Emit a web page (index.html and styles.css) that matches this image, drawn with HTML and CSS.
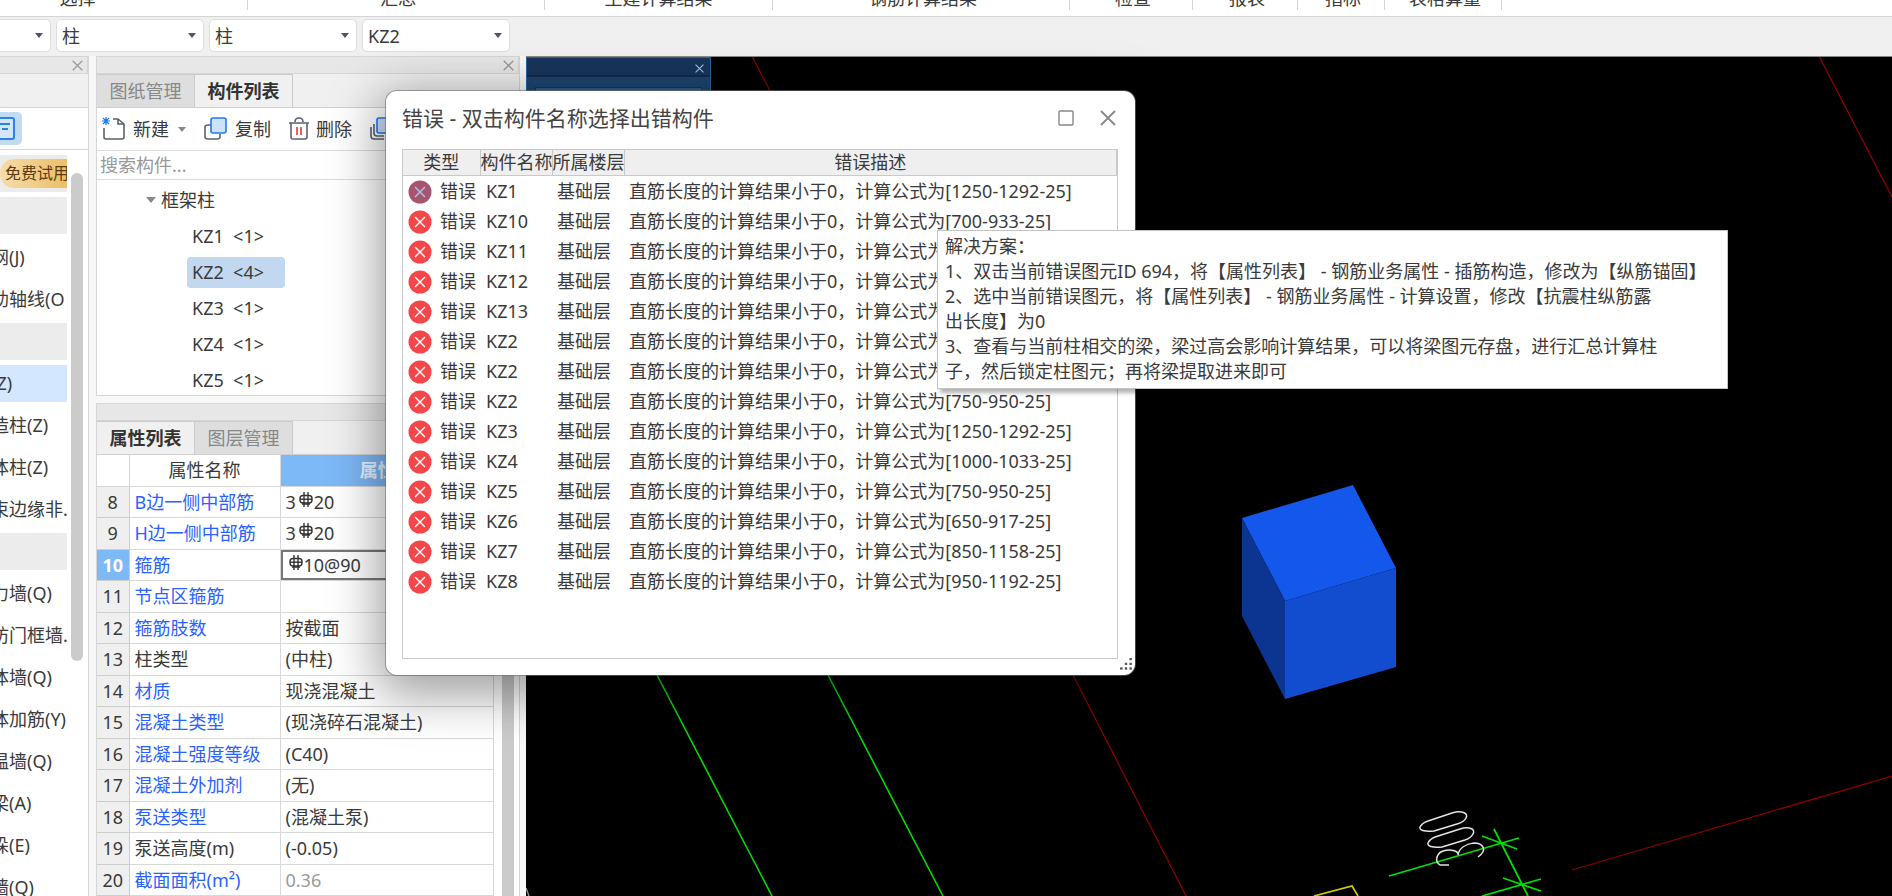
FILE: index.html
```html
<!DOCTYPE html>
<html lang="zh-CN">
<head>
<meta charset="utf-8">
<title>构件列表</title>
<link rel="stylesheet" href="styles.css">
</head>
<body>
<svg class="defs" aria-hidden="true">
  <symbol id="rebar" viewBox="0 0 14 16"><g fill="none" stroke="#333" stroke-width="1.4"><path d="M5 0V15M9 0V15M3 12H11"/><rect x="1" y="3.500" width="12" height="7.500" rx="3"/><path d="M1 7.200H13"/></g></symbol>
  <symbol id="err" viewBox="0 0 24 24"><circle cx="12" cy="12" r="11.500"/><path d="M7 7 17 17M17 7 7 17" fill="none" stroke="currentColor" stroke-width="1.400"/></symbol>
  <symbol id="cross" viewBox="0 0 16 16"><path d="M1 1 15 15M15 1 1 15" fill="none" stroke="currentColor" stroke-width="1.800"/></symbol>
</svg>

<header class="ribbon">
  <span class="group g-select">选择</span><span class="group g-sum">汇总</span><span class="group g-civil">土建计算结果</span><span class="group g-steel">钢筋计算结果</span><span class="group g-check">检查</span><span class="group g-report">报表</span><span class="group g-index">指标</span><span class="group g-table">表格算量</span>
</header>

<div class="toolbar">
  <span class="combo combo-cut"><select aria-label="楼层"><option></option></select></span>
  <span class="combo"><select aria-label="构件大类"><option>柱</option></select></span>
  <span class="combo"><select aria-label="构件类型"><option>柱</option></select></span>
  <span class="combo"><select aria-label="构件"><option>KZ2</option></select></span>
</div>

<main class="workspace">
  <aside class="modules">
    <div class="panel-head"><button class="close" aria-label="关闭"><svg><use href="#cross"/></svg></button></div>
    <div class="modules-band"></div>
    <div class="modules-tools"><button class="view-btn" aria-label="列表视图"><svg width="22" height="26" viewBox="0 0 22 26"><rect x="-6" y="2" width="20" height="21" rx="2" fill="#d3e6fb" stroke="#2a82e4" stroke-width="2"/><path d="M-2 8H10M2 13H8" stroke="#2a82e4" stroke-width="2"/></svg></button></div>
    <div class="modules-body">
      <ul class="modules-list">
        <li class="band"><span class="trial">免费试用</span></li>
        <li class="band"></li>
        <li>轴网(J)</li>
        <li>辅助轴线(O</li>
        <li class="band"></li>
        <li class="on">柱(Z)</li>
        <li>构造柱(Z)</li>
        <li>砌体柱(Z)</li>
        <li>约束边缘非.</li>
        <li class="band"></li>
        <li>剪力墙(Q)</li>
        <li>人防门框墙.</li>
        <li>砌体墙(Q)</li>
        <li>砌体加筋(Y)</li>
        <li>保温墙(Q)</li>
        <li>暗梁(A)</li>
        <li>墙垛(E)</li>
        <li>幕墙(Q)</li>
      </ul>
      <div class="modules-scroll"></div>
    </div>
  </aside>

  <div class="side">
    <section class="panel components">
      <div class="panel-head"><button class="close" aria-label="关闭"><svg><use href="#cross"/></svg></button></div>
      <div class="tabs"><button>图纸管理</button><button class="on">构件列表</button></div>
      <div class="actions">
        <button><svg width="24" height="24" viewBox="0 0 24 24" fill="none"><path d="M2 11V20Q2 22 4 22H20Q22 22 22 20V7L16 2H11M16 2V7H22" stroke="#5a6270" stroke-width="1.600"/><path d="M1 1 7 7M7 1 1 7M4 0V8M0 4H8" stroke="#1e7bf0" stroke-width="1.200"/></svg>新建<i class="caret"></i></button>
        <button><svg width="24" height="24" viewBox="0 0 24 24" fill="none"><path d="M7 8H4Q1 8 1 10V20Q1 22 4 22H13Q16 22 16 20V17" stroke="#5a6270" stroke-width="1.600"/><rect x="7" y="1" width="15" height="15" rx="2" fill="#cfe2fb" stroke="#1e7bf0" stroke-width="1.600"/></svg>复制</button>
        <button><svg width="20" height="24" viewBox="0 0 20 24" fill="none"><path d="M0 6H20M6 5Q6 1 10 1T14 5M2 6V20Q2 22 4 22H16Q18 22 18 20V6" stroke="#5a6270" stroke-width="1.600"/><path d="M8 10V18M12 10V18" stroke="#e23b3b" stroke-width="1.600"/></svg>删除</button>
        <button aria-label="层间复制"><svg width="24" height="24" viewBox="0 0 24 24" fill="none"><path d="M1 10V19Q1 22 4 22H14M4 7V16Q4 19 7 19H14" stroke="#5a6270" stroke-width="1.600"/><rect x="7" y="1" width="15" height="15" rx="2" fill="#cfe2fb" stroke="#1e7bf0" stroke-width="1.600"/></svg></button>
      </div>
      <input class="search" type="text" aria-label="搜索构件" placeholder="搜索构件...">
      <ul class="tree">
        <li class="root"><i class="caret"></i>框架柱</li>
        <li><span>KZ1  &lt;1&gt;</span></li>
        <li><span class="on">KZ2  &lt;4&gt;</span></li>
        <li><span>KZ3  &lt;1&gt;</span></li>
        <li><span>KZ4  &lt;1&gt;</span></li>
        <li><span>KZ5  &lt;1&gt;</span></li>
      </ul>
    </section>

    <section class="panel props">
      <div class="panel-head"></div>
      <div class="tabs"><button class="on">属性列表</button><button>图层管理</button></div>
      <div class="props-body">
        <table class="props-table">
          <colgroup><col class="c-num"><col class="c-name"><col></colgroup>
          <thead><tr><th></th><th>属性名称</th><th class="blue">属性值</th></tr></thead>
          <tbody>
            <tr><th>8</th><td class="link">B边一侧中部筋</td><td>3<svg class="rb"><use href="#rebar"/></svg>20</td></tr>
            <tr><th>9</th><td class="link">H边一侧中部筋</td><td>3<svg class="rb"><use href="#rebar"/></svg>20</td></tr>
            <tr><th class="cur">10</th><td class="link">箍筋</td><td class="edit"><svg class="rb"><use href="#rebar"/></svg>10@90</td></tr>
            <tr><th>11</th><td class="link">节点区箍筋</td><td></td></tr>
            <tr><th>12</th><td class="link">箍筋肢数</td><td>按截面</td></tr>
            <tr><th>13</th><td>柱类型</td><td>(中柱)</td></tr>
            <tr><th>14</th><td class="link">材质</td><td>现浇混凝土</td></tr>
            <tr><th>15</th><td class="link">混凝土类型</td><td>(现浇碎石混凝土)</td></tr>
            <tr><th>16</th><td class="link">混凝土强度等级</td><td>(C40)</td></tr>
            <tr><th>17</th><td class="link">混凝土外加剂</td><td>(无)</td></tr>
            <tr><th>18</th><td class="link">泵送类型</td><td>(混凝土泵)</td></tr>
            <tr><th>19</th><td>泵送高度(m)</td><td>(-0.05)</td></tr>
            <tr><th>20</th><td class="link">截面面积(m²)</td><td class="dim">0.36</td></tr>
          </tbody>
        </table>
        <div class="props-scroll"></div>
      </div>
    </section>
  </div>

  <section class="view">
    <svg class="scene" aria-label="三维视图">
      <g transform="translate(-526 -57)" fill="none" stroke-width="1.300">
        <g stroke="#8a0000"><path d="M752 56 770 91M1819 56 1892 197M1073 675 1186 896M1572 870 1892 776"/></g>
        <g stroke="#00dc00" stroke-width="1.600"><path d="M657 675 772 896M828 675 943 896"/></g>
        <g stroke="#00e000" stroke-width="1.800"><path d="M1389 876 1519 838M1494 829 1528 896M1482 836 1517 849M1503 878 1541 891M1482 896 1541 879"/></g>
        <path d="M1314 896 1352 886 1358 896" stroke="#d8d000" stroke-width="1.600"/>
        <path d="M526 888 529 896" stroke="#999"/>
        <g stroke="#e4e4e4" stroke-width="1.500"><path d="M1428 821 1452 813C1461 810 1469 813 1466 818Q1464 822 1457 824L1434 831C1424 832 1419 830 1420 827Q1422 823 1428 821ZM1435 837 1460 829C1469 826 1476 829 1473 834Q1471 838 1465 840L1442 847C1432 848 1427 846 1428 843Q1430 839 1435 837Z"/><path d="M1449 865H1440C1434 861 1437 853 1443 851 1452 848 1459 852 1458 855 1459 848 1466 844 1474 843 1483 843 1488 850 1478 857"/></g>
        <g stroke="none"><path d="M1242 518 1353 485 1396 568 1285 601Z" fill="#1457eb"/><path d="M1242 518 1285 601V699L1242 616Z" fill="#0c3491"/><path d="M1285 601 1396 568V667L1285 699Z" fill="#124dd0"/></g>
      </g>
    </svg>
    <div class="float"><div class="float-head"><button class="close" aria-label="关闭"><svg><use href="#cross"/></svg></button></div><div class="float-body"></div></div>
  </section>
</main>

<div class="dialog" role="dialog" aria-labelledby="dlg-title">
  <div class="dialog-head">
    <h1 id="dlg-title">错误 - 双击构件名称选择出错构件</h1>
    <button aria-label="最大化"><svg width="16" height="16" viewBox="0 0 16 16"><rect x="1" y="1" width="14" height="14" rx="1" fill="none" stroke="#888" stroke-width="1.400"/></svg></button>
    <button aria-label="关闭"><svg width="16" height="16"><use href="#cross"/></svg></button>
  </div>
  <div class="dialog-body">
    <table class="errors">
      <colgroup><col class="e-type"><col class="e-name"><col class="e-floor"><col></colgroup>
      <thead><tr><th>类型</th><th>构件名称</th><th>所属楼层</th><th>错误描述</th></tr></thead>
      <tbody>
        <tr class="sel"><td><svg class="err"><use href="#err"/></svg>错误</td><td>KZ1</td><td>基础层</td><td>直筋长度的计算结果小于0，计算公式为[1250-1292-25]</td></tr>
        <tr><td><svg class="err"><use href="#err"/></svg>错误</td><td>KZ10</td><td>基础层</td><td>直筋长度的计算结果小于0，计算公式为[700-933-25]</td></tr>
        <tr><td><svg class="err"><use href="#err"/></svg>错误</td><td>KZ11</td><td>基础层</td><td>直筋长度的计算结果小于0，计算公式为</td></tr>
        <tr><td><svg class="err"><use href="#err"/></svg>错误</td><td>KZ12</td><td>基础层</td><td>直筋长度的计算结果小于0，计算公式为</td></tr>
        <tr><td><svg class="err"><use href="#err"/></svg>错误</td><td>KZ13</td><td>基础层</td><td>直筋长度的计算结果小于0，计算公式为</td></tr>
        <tr><td><svg class="err"><use href="#err"/></svg>错误</td><td>KZ2</td><td>基础层</td><td>直筋长度的计算结果小于0，计算公式为</td></tr>
        <tr><td><svg class="err"><use href="#err"/></svg>错误</td><td>KZ2</td><td>基础层</td><td>直筋长度的计算结果小于0，计算公式为</td></tr>
        <tr><td><svg class="err"><use href="#err"/></svg>错误</td><td>KZ2</td><td>基础层</td><td>直筋长度的计算结果小于0，计算公式为[750-950-25]</td></tr>
        <tr><td><svg class="err"><use href="#err"/></svg>错误</td><td>KZ3</td><td>基础层</td><td>直筋长度的计算结果小于0，计算公式为[1250-1292-25]</td></tr>
        <tr><td><svg class="err"><use href="#err"/></svg>错误</td><td>KZ4</td><td>基础层</td><td>直筋长度的计算结果小于0，计算公式为[1000-1033-25]</td></tr>
        <tr><td><svg class="err"><use href="#err"/></svg>错误</td><td>KZ5</td><td>基础层</td><td>直筋长度的计算结果小于0，计算公式为[750-950-25]</td></tr>
        <tr><td><svg class="err"><use href="#err"/></svg>错误</td><td>KZ6</td><td>基础层</td><td>直筋长度的计算结果小于0，计算公式为[650-917-25]</td></tr>
        <tr><td><svg class="err"><use href="#err"/></svg>错误</td><td>KZ7</td><td>基础层</td><td>直筋长度的计算结果小于0，计算公式为[850-1158-25]</td></tr>
        <tr><td><svg class="err"><use href="#err"/></svg>错误</td><td>KZ8</td><td>基础层</td><td>直筋长度的计算结果小于0，计算公式为[950-1192-25]</td></tr>
      </tbody>
    </table>
  </div>
  <svg class="grip" viewBox="0 0 12 12" fill="#555"><path d="M9 0h2v2H9zM9 4h2v2H9zM5 4h2v2H5zM9 8h2v2H9zM5 8h2v2H5zM1 8h2v2H1z"/></svg>
</div>

<div class="tip" role="tooltip">解决方案：<br>1、双击当前错误图元ID 694，将【属性列表】 - 钢筋业务属性 - 插筋构造，修改为【纵筋锚固】<br>2、选中当前错误图元，将【属性列表】 - 钢筋业务属性 - 计算设置，修改【抗震柱纵筋露<br>出长度】为0<br>3、查看与当前柱相交的梁，梁过高会影响计算结果，可以将梁图元存盘，进行汇总计算柱<br>子，然后锁定柱图元；再将梁提取进来即可</div>
</body>
</html>
```
FILE: styles.css
```css
* { box-sizing: border-box; }
body {
  margin: 0;
  height: 100vh;
  overflow: hidden;
  display: flex;
  flex-direction: column;
  background: #f8f8f8;
  color: #3a3a3a;
  font: 18px/24px "Noto Sans", "Noto Sans CJK SC", sans-serif;
  position: relative;
}
button, select, input { font: inherit; color: inherit; margin: 0; }
button { border: 0; background: none; padding: 0; }
ul { list-style: none; margin: 0; padding: 0; }
svg { display: block; }
.defs { position: absolute; width: 0; height: 0; }

.ribbon { flex: none; height: 17px; display: flex; background: #fff; border-bottom: 1px solid #d4d4d4; overflow: hidden; }
.group { height: 10px; border-right: 1px solid #d4d4d4; display: flex; justify-content: center; align-items: flex-end; white-space: nowrap; }
.g-select { width: 248px; padding-right: 92px; }
.g-sum { width: 297px; padding-left: 4px; }
.g-civil { width: 228px; }
.g-steel { width: 297px; padding-left: 4px; }
.g-check { width: 123px; padding-left: 4px; }
.g-report { width: 105px; padding-left: 4px; }
.g-index { width: 87px; padding-left: 4px; }
.g-table { width: 117px; padding-left: 4px; }

.toolbar { flex: none; height: 39px; display: flex; gap: 5px; padding: 2px 0 4px; background: #f0f0f0; }
.combo { width: 148px; position: relative; }
.combo-cut { margin-left: -97px; }
.combo select { width: 100%; height: 33px; appearance: none; border: 1px solid #dedede; border-radius: 5px; background: #fff; padding: 0 5px; }
.combo::after { content: ""; position: absolute; right: 8px; top: 14px; border: 4px solid transparent; border-top: 5px solid #4d5666; border-bottom: 0; pointer-events: none; }

.workspace { flex: 1; min-height: 0; display: flex; }
.panel-head { flex: none; height: 18px; background: #e7e7e7; border: 1px solid #d6d6d6; border-left: 0; display: flex; justify-content: flex-end; align-items: center; padding-right: 4px; }
.close { color: #999; }
.close svg { width: 11px; height: 11px; }

.modules { flex: none; width: 89px; background: #fff; border-right: 1px solid #d6d6d6; display: flex; flex-direction: column; overflow: hidden; }
.modules-band { flex: none; height: 34px; background: #f0f0f0; border-bottom: 1px solid #d6d6d6; }
.modules-tools { flex: none; height: 42px; border-bottom: 1px solid #d6d6d6; padding-top: 4px; }
.view-btn { width: 22px; height: 33px; background: #c2daf2; border-radius: 0 5px 5px 0; display: flex; align-items: center; }
.modules-body { flex: 1; min-height: 0; display: flex; gap: 4px; overflow: hidden; padding-top: 5px; }
.modules-list { width: 67px; overflow: hidden; display: flex; flex-direction: column; gap: 5px; }
.modules-list li { flex: none; height: 37px; line-height: 37px; white-space: nowrap; text-indent: -27px; }
.modules-list .band { background: #ececec; text-indent: 0; display: flex; align-items: center; }
.modules-list .on { background: #d3e7ff; }
.trial { width: 80px; flex: none; height: 29px; line-height: 29px; padding-left: 5px; font-size: 16px; color: #5b3a0c; background: linear-gradient(90deg, #f6dca8, #eab95c); border-radius: 14px 0 0 14px; }
.modules-scroll { width: 12px; height: 488px; margin-top: 18px; border-radius: 6px; background: #cbcbcb; }

.side { flex: none; width: 424px; margin-left: 7px; display: flex; flex-direction: column; gap: 7px; }
.panel { border: 1px solid #d6d6d6; border-top: 0; background: #fff; display: flex; flex-direction: column; }
.components { flex: none; height: 340px; }
.props { flex: 1; min-height: 0; border-bottom: 0; }
.tabs { flex: none; height: 34px; display: flex; background: #f0f0f0; border-bottom: 1px solid #d0d0d0; }
.tabs button { width: 98px; background: #dedede; color: #888; border-right: 1px solid #c8ccd0; border-top: 1px solid #c8ccd0; }
.tabs .on { background: #f0f0f0; color: #333; font-weight: 700; }
.actions { flex: none; height: 43px; display: flex; align-items: center; gap: 18px; padding-left: 5px; border-bottom: 1px solid #dcdcdc; overflow: hidden; }
.actions button { display: flex; align-items: center; gap: 7px; white-space: nowrap; }
.actions .caret { margin-left: 2px; }
.caret { width: 0; height: 0; border: 4px solid transparent; border-top: 5px solid #888; border-bottom: 0; }
.search { flex: none; height: 29px; width: 100%; border: 0; border-bottom: 1px solid #dcdcdc; padding: 0 3px; outline: 0; }
.search::placeholder { color: #999; opacity: 1; }
.tree { padding-top: 2px; }
.tree li { height: 36px; display: flex; align-items: center; padding-left: 90px; }
.tree .root { padding-left: 49px; gap: 5px; }
.tree .root .caret { border-width: 6px 5px 0; }
.tree span { width: 98px; height: 31px; line-height: 31px; padding-left: 5px; border-radius: 4px; white-space: pre; }
.tree .on { background: #c2d8f0; }

.props-body { flex: 1; min-height: 0; display: flex; overflow: hidden; }
.props-table { flex: none; width: 397px; border-collapse: collapse; table-layout: fixed; align-self: flex-start; }
.c-num { width: 32px; }
.c-name { width: 151px; }
.props-table tr { height: 31px; }
.props-table tbody tr:nth-child(even) { height: 32px; }
.props-table th, .props-table td { padding: 0 5px; border: 1px solid #d8d8d8; border-top: 0; border-left: 0; line-height: 24px; white-space: nowrap; font-weight: 400; text-align: left; }
.props-table th { text-align: center; }
.props-table tbody th { background: #efefef; padding: 0; border-color: #cdcdcd; }
.props-table .blue { background: #7db8f7; color: #eaf3fd; font-weight: 700; }
.props-table tbody .cur { background: #7db8f7; color: #fff; font-weight: 700; }
.props-table .link { color: #2a62ff; }
.props-table .dim { color: #999; }
.props-table .edit { box-shadow: inset 0 0 0 2px #777; }
.rb { display: inline-block; width: 14px; height: 16px; margin: 0 1px 0 3px; vertical-align: 1px; }
.props-scroll { width: 12px; margin-left: 8px; background: #cbcbcb; }

.view { flex: 1; min-width: 0; margin-left: 6px; background: #000; border-top: 1px solid #888; position: relative; overflow: hidden; }
.scene { width: 100%; height: 100%; }
.float { position: absolute; left: 0; top: 0; width: 185px; height: 100px; background: #1d4570; border: 1px solid #2565a3; }
.float-head { height: 19px; background: #17365b; border-bottom: 2px solid #132c4b; display: flex; justify-content: flex-end; align-items: center; padding: 4px 6px 0 0; }
.float .close { color: #a8cdf2; }
.float .close svg { width: 9px; height: 9px; }
.float-body { margin: 10px 8px; height: 60px; background: #2d5c8c; border: 1px solid #163557; }

.dialog { position: absolute; left: 386px; top: 91px; width: 749px; height: 584px; background: #fff; border-radius: 11px; box-shadow: 0 0 0 1px rgba(110, 110, 110, .6), 0 12px 50px 8px rgba(0, 0, 0, .38); padding: 0 17px 16px 16px; display: flex; flex-direction: column; }
.dialog-head { height: 58px; display: flex; align-items: center; gap: 26px; padding: 0 2px 4px 0; }
.dialog-head h1 { flex: 1; margin: 0; font-size: 21px; line-height: 28px; font-weight: 400; color: #444; }
.dialog-head button { color: #888; }
.dialog-body { flex: 1; border: 1px solid #c9c9c9; overflow: hidden; }
.errors { width: 100%; border-collapse: collapse; table-layout: fixed; }
.e-type { width: 77px; }
.e-name { width: 72px; }
.e-floor { width: 72px; }
.errors th { height: 25px; padding: 0; background: #efefef; border-right: 1px solid #c9c9c9; border-bottom: 1px solid #c9c9c9; font-weight: 400; line-height: 24px; white-space: nowrap; }
.errors td { height: 30px; padding: 0 0 0 5px; line-height: 30px; white-space: nowrap; }
.errors td:nth-child(2) { padding-left: 6px; }
.err { display: inline-block; width: 24px; height: 24px; margin-right: 8px; vertical-align: -6px; fill: #f5464a; color: #fff; }
.sel .err { fill: #a9546f; color: #a9c8ee; }
.grip { position: absolute; right: 2px; bottom: 3px; width: 14px; height: 14px; }

.tip { position: absolute; left: 937px; top: 230px; padding: 3px 21px 4px 7px; background: #fff; border: 1px solid #c4c4c4; box-shadow: 3px 4px 4px rgba(0, 0, 0, .3); line-height: 25px; white-space: nowrap; }
```
